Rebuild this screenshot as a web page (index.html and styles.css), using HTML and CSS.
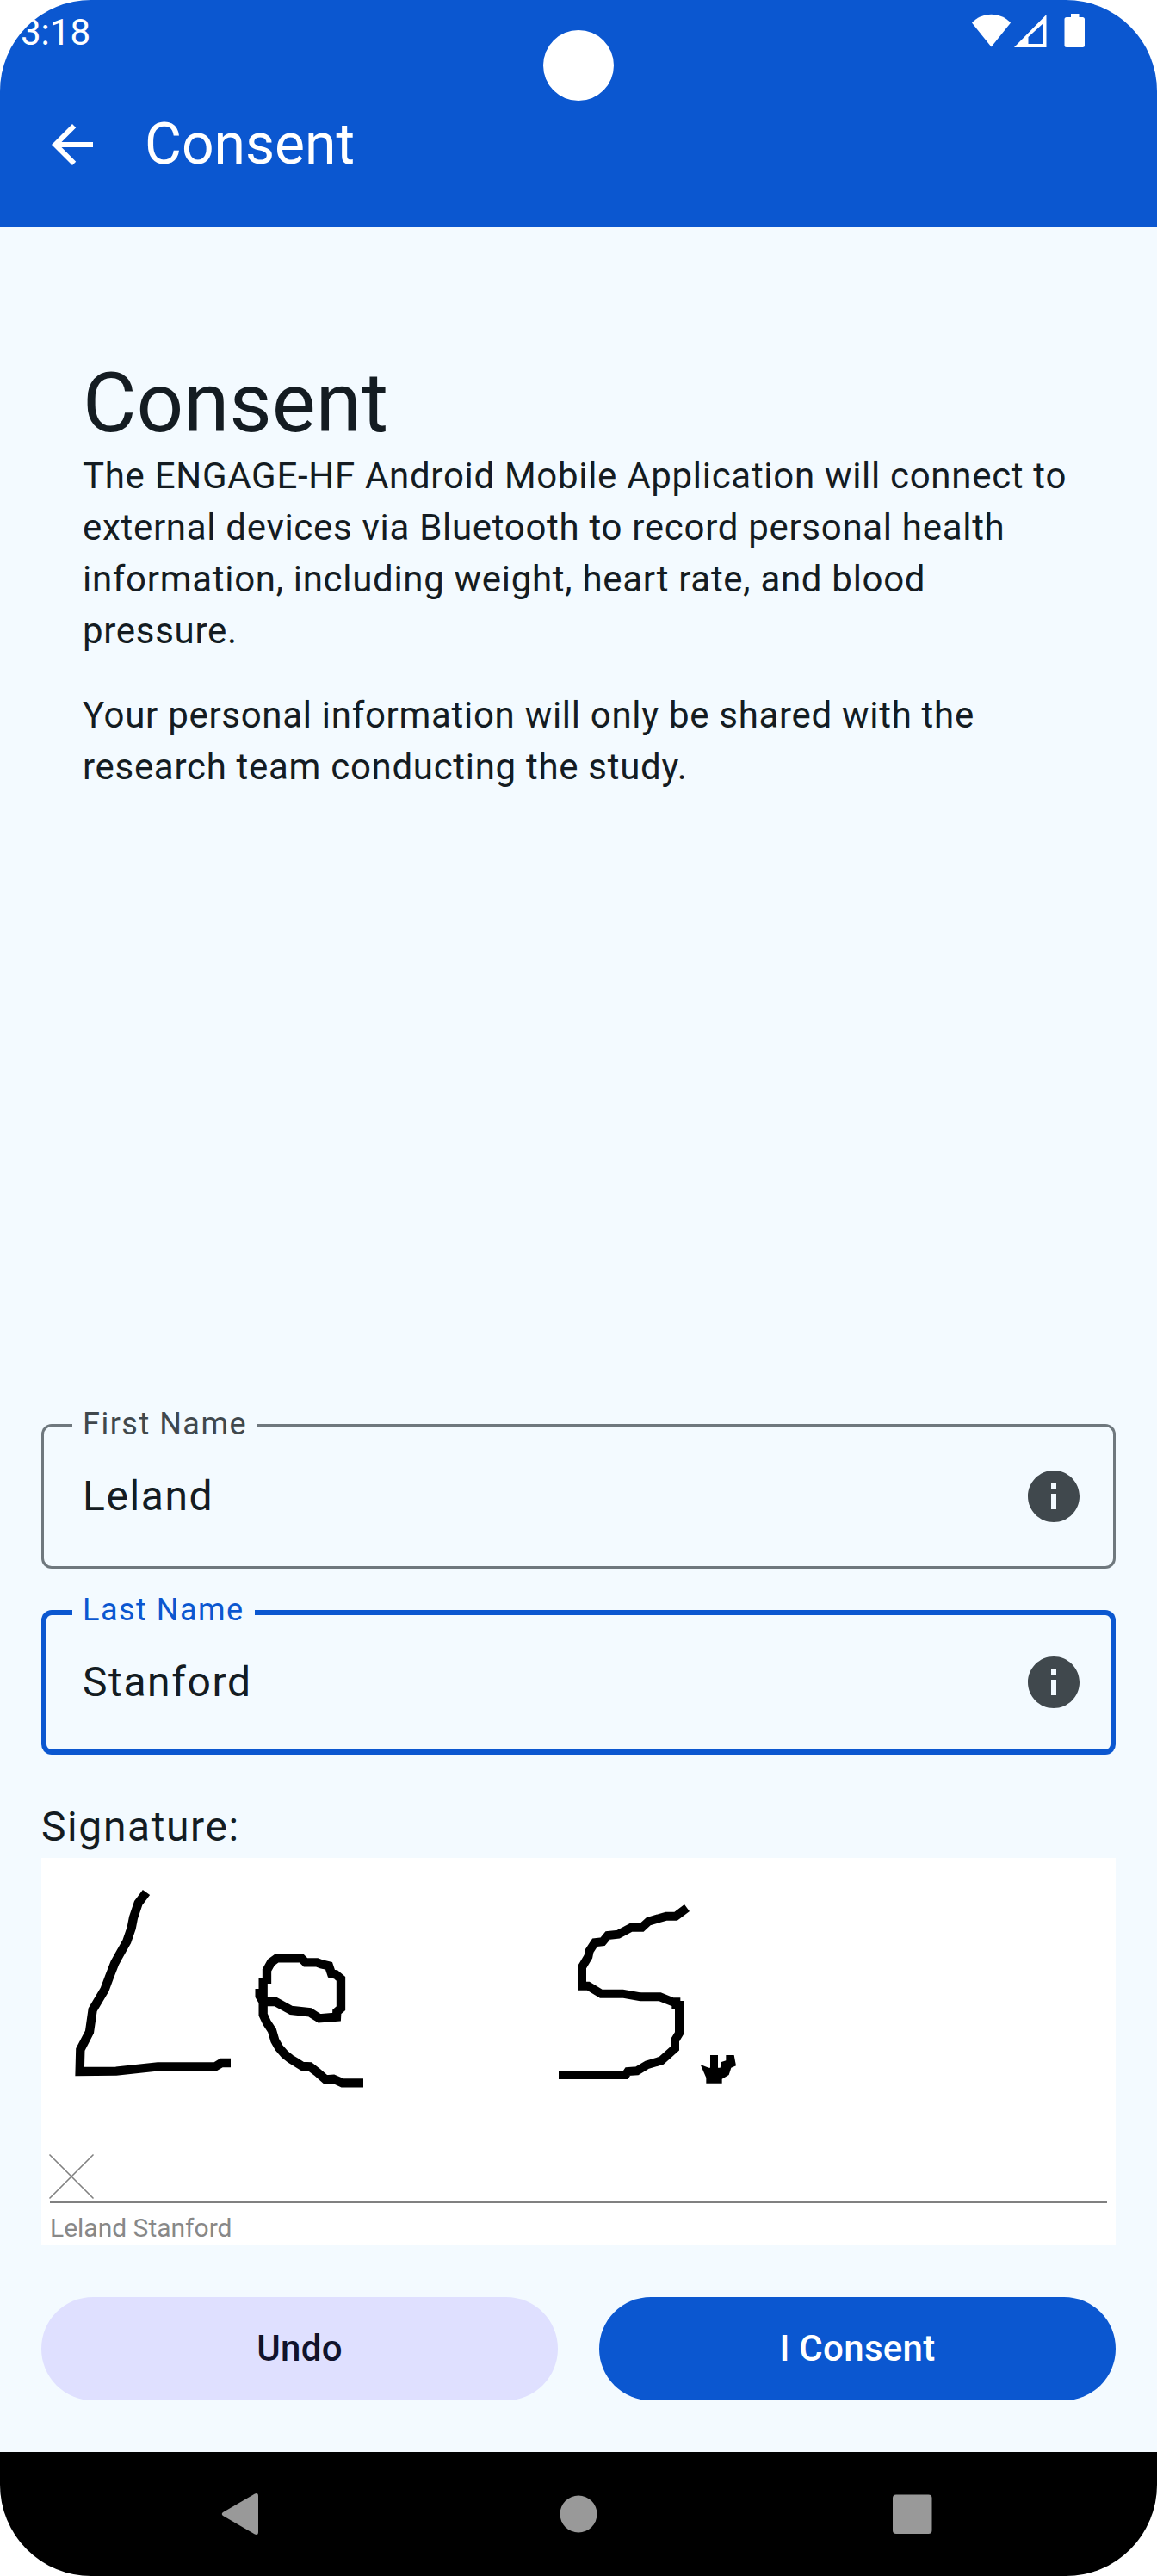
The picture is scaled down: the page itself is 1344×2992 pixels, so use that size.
FILE: index.html
```html
<!DOCTYPE html>
<html lang="en">
<head>
<meta charset="utf-8">
<title>Consent</title>
<link rel="stylesheet" href="styles.css">
</head>
<body>
<div class="screen">
  <header class="top">
    <div class="status">
      <span class="clock">3:18</span>
      <svg class="status-icons" width="132" height="40" viewBox="0 0 132 40" fill="#fff">
        <path d="M0 10.500C6 4 14 .7 22.500 .7S39 4 45 10.500L22.500 38.500Z"/>
        <path fill-rule="evenodd" d="M86.500 1V39H49ZM83 11L65.500 27V35H83Z"/>
        <path d="M115 0h9.500v4h4q2.500 0 2.500 2.500V36.500q0 2.500-2.500 2.500h-18.500q-2.500 0-2.500-2.500V6.500q0-2.500 2.500-2.500h5Z"/>
      </svg>
    </div>
    <div class="bar">
      <svg class="back" width="72" height="72" viewBox="0 0 24 24" fill="#fff"><path d="M20 11H7.830l5.590-5.590L12 4l-8 8 8 8 1.410-1.410L7.830 13H20v-2z"/></svg>
      <span class="bar-title">Consent</span>
    </div>
    <div class="camera"></div>
  </header>

  <main class="content">
    <section class="intro">
      <h1>Consent</h1>
      <p>The ENGAGE-HF Android Mobile Application will connect to<br>external devices via Bluetooth to record personal health<br>information, including weight, heart rate, and blood<br>pressure.</p>
      <p>Your personal information will only be shared with the<br>research team conducting the study.</p>
    </section>

    <section class="form">
      <div class="field">
        <span class="label">First Name</span>
        <span class="value">Leland</span>
        <svg width="72" height="72" viewBox="0 0 24 24" fill="#40484d"><path d="M12 2C6.480 2 2 6.480 2 12s4.480 10 10 10 10-4.480 10-10S17.520 2 12 2zm1 15h-2v-6h2v6zm0-8h-2V7h2v2z"/></svg>
      </div>
      <div class="field focused">
        <span class="label">Last Name</span>
        <span class="value">Stanford</span>
        <svg width="72" height="72" viewBox="0 0 24 24" fill="#40484d"><path d="M12 2C6.480 2 2 6.480 2 12s4.480 10 10 10 10-4.480 10-10S17.520 2 12 2zm1 15h-2v-6h2v6zm0-8h-2V7h2v2z"/></svg>
      </div>
      <div class="sign-title">Signature:</div>
      <div class="pad">
        <svg class="ink" width="1248" height="450" viewBox="0 0 1248 450" fill="none">
          <g stroke="#000" stroke-width="31" transform="translate(-8 -18) scale(.33333)">
            <path d="M390 174L362 211 345 262 338 298 322 345 291 400 280 420 262 466 245 512 203 583 192 660 160 722 158 798 285 797 430 781H630L652 768H684"/>
            <path d="M785 510V535L797 555H840L895 585 960 592 993 613 1053 608 1054 590 1068 578V475L1050 460 1035 457 1026 430 1000 424 985 418H945L930 403H845L825 418 810 445V492M797 472V600L810 628 828 655 838 690 852 715 872 738 892 754 912 766 934 780 960 781 985 800 1015 826 1042 824 1073 838H1146"/>
          </g>
          <g stroke="#000" stroke-width="30" transform="translate(552 22) scale(.33333)">
            <path d="M594 108L555 137H522L460 155 437 176H400L355 200 318 204 300 226 273 229 254 258 250 278 228 315V380H250L295 407H370L432 418H500L545 436H556V460M567 432V545L552 570V598L505 640 455 655 420 676 388 678 380 690H147"/>
            <path stroke="none" fill="#000" d="M641 654L670 665H675V621H702V665H710L714 645 730 640V621H758L765 658 748 665 740 690 716 704V719H661V700Z"/>
          </g>
          <path stroke="#808080" stroke-width="1.500" d="M9.500 344.500L60.500 395.500M60.500 344.500L9.500 395.500"/>
          <path stroke="#808080" stroke-width="2" d="M10 400H1238"/>
        </svg>
        <span class="signer">Leland Stanford</span>
      </div>
      <div class="actions">
        <div class="btn undo">Undo</div>
        <div class="btn agree">I Consent</div>
      </div>
    </section>
  </main>

  <nav class="nav">
    <svg width="1344" height="144" viewBox="0 0 1344 144" fill="#999">
      <path d="M259 70L296 48.500Q300 47 300 51V93Q300 97 296 95.500L259 74Q256.500 72 259 70Z"/>
      <circle cx="672" cy="72" r="21.500"/>
      <rect x="1037" y="49.500" width="45.500" height="45.500" rx="4"/>
    </svg>
  </nav>
</div>
</body>
</html>
```

FILE: styles.css
```css
* { box-sizing: border-box; }

body {
  margin: 0;
  background: #fff;
  color: #141c22;
  font-family: Roboto, "Liberation Sans", sans-serif;
}

svg { display: block; flex: none; }

.screen {
  display: flex;
  flex-direction: column;
  width: 1344px;
  height: 2992px;
  overflow: hidden;
  border-radius: 106px;
  background: #f3faff;
}

.top {
  position: relative;
  height: 264px;
  background: #0b57d0;
  color: #fff;
}

.status {
  display: flex;
  justify-content: space-between;
  height: 72px;
  padding: 16px 83px 0 24px;
}

.clock { font-size: 42px; line-height: 44px; }

.bar {
  display: flex;
  align-items: center;
  gap: 48px;
  height: 192px;
  padding-left: 48px;
}

.bar-title { font-size: 66px; line-height: 84px; }

/* front camera cut-out, drawn over the app bar */
.camera {
  position: absolute;
  left: 631px;
  top: 35px;
  width: 82px;
  height: 82px;
  border-radius: 50%;
  background: #fff;
}

.content {
  flex: 1;
  display: flex;
  flex-direction: column;
  justify-content: space-between;
  padding: 149px 48px 60px;
}

.intro { padding: 0 48px; }

.intro h1 {
  margin: 0;
  font-size: 96px;
  font-weight: 400;
  line-height: 110px;
}

.intro p {
  margin: 0 0 38px;
  font-size: 42px;
  line-height: 60px;
  letter-spacing: .7px;
  white-space: nowrap;
}

.field {
  position: relative;
  display: flex;
  align-items: center;
  justify-content: space-between;
  height: 168px;
  margin-bottom: 48px;
  padding: 0 36px 0 48px;
  border-radius: 12px;
  box-shadow: inset 0 0 0 3px #6f787e;
}

.field.focused { box-shadow: inset 0 0 0 6px #0b57d0; }

/* label sits over the outline and opens a notch in it */
.label {
  position: absolute;
  left: 36px;
  top: -24px;
  padding: 0 12px;
  background: #f3faff;
  color: #40484d;
  font-size: 36px;
  line-height: 48px;
  letter-spacing: 1.5px;
}

.focused .label { color: #0b57d0; }

.value, .sign-title {
  font-size: 48px;
  line-height: 72px;
  letter-spacing: 1.6px;
}

.pad {
  position: relative;
  height: 450px;
  background: #fff;
}

.signer {
  position: absolute;
  left: 10px;
  top: 412px;
  color: #888;
  font-size: 30px;
  line-height: 36px;
}

.actions {
  display: flex;
  gap: 48px;
  margin-top: 60px;
}

.btn {
  flex: 1;
  height: 120px;
  border-radius: 60px;
  font-size: 42px;
  font-weight: 500;
  line-height: 120px;
  letter-spacing: .3px;
  text-align: center;
}

.undo { background: #dfe0ff; color: #11132c; }
.agree { background: #0b57d0; color: #fff; }

.nav { height: 144px; background: #000; }
```
